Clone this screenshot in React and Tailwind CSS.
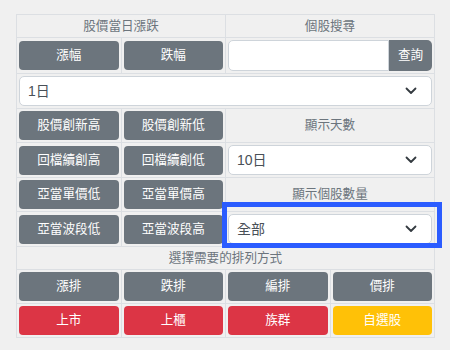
import React from "react";

const font = { fontFamily: '"Liberation Sans", "Noto Sans CJK TC", sans-serif' };

function Btn({ children, color = "gray" }) {
  const cls =
    color === "gray"
      ? "bg-[#6c757d] text-white"
      : color === "red"
      ? "bg-[#dc3545] text-white"
      : "bg-[#ffc107] text-white";
  return (
    <div className={`${cls} h-[29px] w-full rounded-[4px] flex items-center justify-center text-[12.6px]`}>
      {children}
    </div>
  );
}

function Cell({ children, span = 1, className = "" }) {
  const spanCls = span === 4 ? "col-span-4" : span === 2 ? "col-span-2" : "col-span-1";
  return (
    <div className={`${spanCls} border-r border-b border-[#dcdfe3] ${className}`}>{children}</div>
  );
}

function BtnCell({ children, color, span }) {
  return (
    <Cell span={span} className="px-[2px] py-[2px] flex items-center">
      <Btn color={color}>{children}</Btn>
    </Cell>
  );
}

function Label({ children, span }) {
  return (
    <Cell span={span} className="min-h-[23px] flex items-center justify-center text-[12.6px] text-[#6c757d]">
      {children}
    </Cell>
  );
}

function Chevron() {
  return (
    <svg width="12" height="8" viewBox="0 0 12 8" fill="none">
      <path d="M1.5 1.5 L6 6 L10.5 1.5" stroke="#343a40" strokeWidth="1.8" strokeLinecap="round" strokeLinejoin="round" />
    </svg>
  );
}

function Select({ value }) {
  return (
    <div className="h-[30px] w-full bg-white border border-[#ced4da] rounded-[5px] flex items-center justify-between pl-[8px] pr-[14px] text-[14px] text-[#495057]">
      <span>{value}</span>
      <Chevron />
    </div>
  );
}

function SelectCell({ value, span }) {
  return (
    <Cell span={span} className="px-[2px] py-[2px] flex items-center">
      <Select value={value} />
    </Cell>
  );
}

export default function App() {
  return (
    <div className="relative w-[450px] h-[350px] bg-[#f0f0f0] pt-[14px] pl-[16px]" style={font}>
      <div className="w-[419px] grid grid-cols-4 border-l border-t border-[#dcdfe3]">
        <Label span={2}>股價當日漲跌</Label>
        <Label span={2}>個股搜尋</Label>

        <BtnCell>漲幅</BtnCell>
        <BtnCell>跌幅</BtnCell>
        <Cell span={2} className="px-[2px] py-[2px] flex items-center">
          <div className="flex w-full h-[31px]">
            <div className="flex-1 bg-white border border-[#ced4da] rounded-l-[5px]" />
            <div className="w-[43px] bg-[#6c757d] text-white rounded-r-[5px] flex items-center justify-center text-[12.6px]">
              查詢
            </div>
          </div>
        </Cell>

        <SelectCell span={4} value="1日" />

        <BtnCell>股價創新高</BtnCell>
        <BtnCell>股價創新低</BtnCell>
        <Label span={2}>顯示天數</Label>

        <BtnCell>回檔續創高</BtnCell>
        <BtnCell>回檔續創低</BtnCell>
        <SelectCell span={2} value="10日" />

        <BtnCell>亞當單價低</BtnCell>
        <BtnCell>亞當單價高</BtnCell>
        <Label span={2}>顯示個股數量</Label>

        <BtnCell>亞當波段低</BtnCell>
        <BtnCell>亞當波段高</BtnCell>
        <SelectCell span={2} value="全部" />

        <Label span={4}>選擇需要的排列方式</Label>

        <BtnCell>漲排</BtnCell>
        <BtnCell>跌排</BtnCell>
        <BtnCell>編排</BtnCell>
        <BtnCell>價排</BtnCell>

        <BtnCell color="red">上市</BtnCell>
        <BtnCell color="red">上櫃</BtnCell>
        <BtnCell color="red">族群</BtnCell>
        <BtnCell color="yellow">自選股</BtnCell>
      </div>
      <div className="absolute left-[222px] top-[202px] w-[220px] h-[46px] border-[5px] border-[#2b5cff]" />
    </div>
  );
}
